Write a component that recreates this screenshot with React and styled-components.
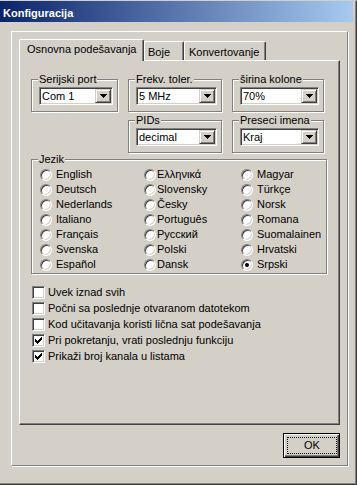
import React from "react";
import styled, { createGlobalStyle } from "styled-components";

const Global = createGlobalStyle`
  html, body { margin: 0; padding: 0; background: #D4D0C8; }
  body { font-family: "Liberation Sans", Arial, sans-serif; font-size: 11px; line-height: 13px; color: #000; }
  *, *::before, *::after { box-sizing: border-box; }
`;

const Window = styled.div`
  width: 357px;
  height: 485px;
  background: #D4D0C8;
  border-top: 1px solid #D4D0C8;
  border-right: 1px solid #404040;
  border-bottom: 1px solid #404040;
  box-shadow: inset -1px -1px 0 #808080;
  padding-right: 3px;
  display: flex;
  flex-direction: column;
`;

const Caption = styled.div`
  height: 21px;
  flex: none;
  background: linear-gradient(to right, #0A246A, #A6CAF0);
  color: #fff;
  font-weight: bold;
  padding: 6px 0 0 3px;
  white-space: nowrap;
`;

const Frame = styled.div`
  margin: 9px 0 0 11px;
  width: 337px;
  height: 435px;
  flex: none;
  border: 1px solid;
  border-color: #fff #808080 #808080 #fff;
  box-shadow: 1px 1px 0 #fff;
  padding: 7px;
  display: flex;
  flex-direction: column;
`;

const TabStrip = styled.div`
  display: flex;
  align-items: flex-end;
  height: 21px;
  flex: none;
  position: relative;
  z-index: 1;
`;

const Tab = styled.div`
  width: ${(p) => p.$w}px;
  height: ${(p) => (p.$active ? 22 : 19)}px;
  margin-bottom: ${(p) => (p.$active ? -1 : 0)}px;
  padding: ${(p) => (p.$active ? 3 : 4)}px 0 0 ${(p) => p.$pl}px;
  background: #D4D0C8;
  border-top: 1px solid #fff;
  border-left: 1px solid #fff;
  border-right: 1px solid #404040;
  box-shadow: inset -1px 0 0 #808080;
  border-radius: 2px 2px 0 0;
  white-space: nowrap;
`;

const Panel = styled.div`
  width: 321px;
  height: 365px;
  flex: none;
  border: 1px solid;
  border-color: #fff #404040 #404040 #fff;
  box-shadow: inset -1px -1px 0 #808080;
  padding: 18px 0 0 11px;
`;

const TopGrid = styled.div`
  display: grid;
  grid-template-columns: 87px 94px 92px;
  grid-template-rows: 33px 33px;
  column-gap: 10px;
  row-gap: 8px;
`;

const Group = styled.div`
  position: relative;
  grid-column: ${(p) => p.$col || "auto"};
  grid-row: ${(p) => p.$row || "auto"};
  border: 1px solid #808080;
  box-shadow: inset 1px 1px 0 #fff, 1px 1px 0 #fff;
  padding: 7px 4px 0 7px;
`;

const Legend = styled.span`
  position: absolute;
  top: -7px;
  left: 6px;
  padding: 0 1px;
  background: #D4D0C8;
  white-space: nowrap;
`;

const ComboBox = styled.div`
  height: 18px;
  display: flex;
  background: #fff;
  border: 1px solid;
  border-color: #808080 #fff #fff #808080;
  box-shadow: inset 1px 1px 0 #404040, inset -1px -1px 0 #D4D0C8;
  padding: 1px;
`;

const ComboValue = styled.span`
  flex: 1;
  display: flex;
  align-items: center;
  padding-left: 1px;
  white-space: nowrap;
`;

const DropButton = styled.span`
  width: 16px;
  flex: none;
  background: #D4D0C8;
  border: 1px solid;
  border-color: #D4D0C8 #404040 #404040 #D4D0C8;
  box-shadow: inset 1px 1px 0 #fff, inset -1px -1px 0 #808080;
  display: flex;
  align-items: center;
  justify-content: center;
`;

const LangGroup = styled(Group)`
  width: 296px;
  margin-top: 6px;
  padding: 7px 0 1px 8px;
`;

const LangGrid = styled.div`
  display: grid;
  grid-template-columns: 104px 97px auto;
  grid-template-rows: repeat(7, 15px);
  grid-auto-flow: column;
`;

const RadioRow = styled.label`
  display: flex;
  align-items: center;
  gap: ${(p) => p.$gap}px;
  white-space: nowrap;
`;

const RadioCircle = styled.span`
  width: 12px;
  height: 12px;
  flex: none;
  border-radius: 50%;
  background: #fff;
  border: 1px solid;
  border-color: #808080 #fff #fff #808080;
  box-shadow: inset 1px 1px 0 #404040, inset -1px -1px 0 #D4D0C8;
  display: flex;
  align-items: center;
  justify-content: center;
`;

const RadioDot = styled.span`
  width: 4px;
  height: 4px;
  border-radius: 50%;
  background: #000;
`;

const CheckList = styled.div`
  margin: 10px 0 0 1px;
  display: flex;
  flex-direction: column;
`;

const CheckRow = styled.label`
  display: flex;
  align-items: center;
  gap: 3px;
  height: 16px;
  white-space: nowrap;
`;

const CheckBox = styled.span`
  width: 13px;
  height: 13px;
  flex: none;
  background: #fff;
  border: 1px solid;
  border-color: #808080 #fff #fff #808080;
  box-shadow: inset 1px 1px 0 #404040, inset -1px -1px 0 #D4D0C8;
  display: flex;
  align-items: center;
  justify-content: center;
`;

const Footer = styled.div`
  display: flex;
  justify-content: flex-end;
  margin-top: 8px;
`;

const Button = styled.button`
  width: 57px;
  height: 25px;
  font: inherit;
  color: #000;
  background: #D4D0C8;
  border: 1px solid #000;
  box-shadow: inset 1px 1px 0 #fff, inset -1px -1px 0 #404040, inset -2px -2px 0 #808080;
  padding: 3px 2px 3px 3px;
  display: flex;
`;

const FocusRing = styled.span`
  flex: 1;
  border: 1px dotted #000;
  display: flex;
  align-items: center;
  justify-content: center;
`;

const Arrow = () => (
  <svg width="7" height="4" viewBox="0 0 7 4" shapeRendering="crispEdges">
    <path d="M0 0h7v1H0z M1 1h5v1H1z M2 2h3v1H2z M3 3h1v1H3z" fill="#000" />
  </svg>
);

const CheckMark = () => (
  <svg width="7" height="7" viewBox="0 0 7 7" shapeRendering="crispEdges">
    <path
      d="M6 0h1v1h-1z M5 1h2v1h-2z M0 2h1v1h-1z M4 2h3v1h-3z M0 3h2v1h-2z M3 3h3v1h-3z M0 4h5v1h-5z M1 5h3v1h-3z M2 6h1v1h-1z"
      fill="#000"
    />
  </svg>
);

const Combo = ({ value }) => (
  <ComboBox>
    <ComboValue>{value}</ComboValue>
    <DropButton>
      <Arrow />
    </DropButton>
  </ComboBox>
);

const langs = [
  "English", "Deutsch", "Nederlands", "Italiano", "Français", "Svenska", "Español",
  "Ελληνικά", "Slovensky", "Česky", "Português", "Русский", "Polski", "Dansk",
  "Magyar", "Türkçe", "Norsk", "Romana", "Suomalainen", "Hrvatski", "Srpski",
];

const checks = [
  ["Uvek iznad svih", false],
  ["Počni sa poslednje otvaranom datotekom", false],
  ["Kod učitavanja koristi lična sat podešavanja", false],
  ["Pri pokretanju, vrati poslednju funkciju", true],
  ["Prikaži broj kanala u listama", true],
];

export default function App() {
  return (
    <>
      <Global />
      <Window>
        <Caption>Konfiguracija</Caption>
        <Frame>
          <TabStrip>
            <Tab $active $w={125} $pl={7}>Osnovna podešavanja</Tab>
            <Tab $w={40} $pl={3}>Boje</Tab>
            <Tab $w={82} $pl={4}>Konvertovanje</Tab>
          </TabStrip>
          <Panel>
            <TopGrid>
              <Group $col="1" $row="1">
                <Legend>Serijski port</Legend>
                <Combo value="Com 1" />
              </Group>
              <Group $col="2" $row="1">
                <Legend>Frekv. toler.</Legend>
                <Combo value="5 MHz" />
              </Group>
              <Group $col="3" $row="1">
                <Legend>širina kolone</Legend>
                <Combo value="70%" />
              </Group>
              <Group $col="2" $row="2">
                <Legend>PIDs</Legend>
                <Combo value="decimal" />
              </Group>
              <Group $col="3" $row="2">
                <Legend>Preseci imena</Legend>
                <Combo value="Kraj" />
              </Group>
            </TopGrid>
            <LangGroup>
              <Legend>Jezik</Legend>
              <LangGrid>
                {langs.map((l, i) => (
                  <RadioRow key={l} $gap={i >= 7 && i < 14 ? 1 : 4}>
                    <RadioCircle>{l === "Srpski" && <RadioDot />}</RadioCircle>
                    {l}
                  </RadioRow>
                ))}
              </LangGrid>
            </LangGroup>
            <CheckList>
              {checks.map(([t, c]) => (
                <CheckRow key={t}>
                  <CheckBox>{c && <CheckMark />}</CheckBox>
                  {t}
                </CheckRow>
              ))}
            </CheckList>
          </Panel>
          <Footer>
            <Button>
              <FocusRing>OK</FocusRing>
            </Button>
          </Footer>
        </Frame>
      </Window>
    </>
  );
}
